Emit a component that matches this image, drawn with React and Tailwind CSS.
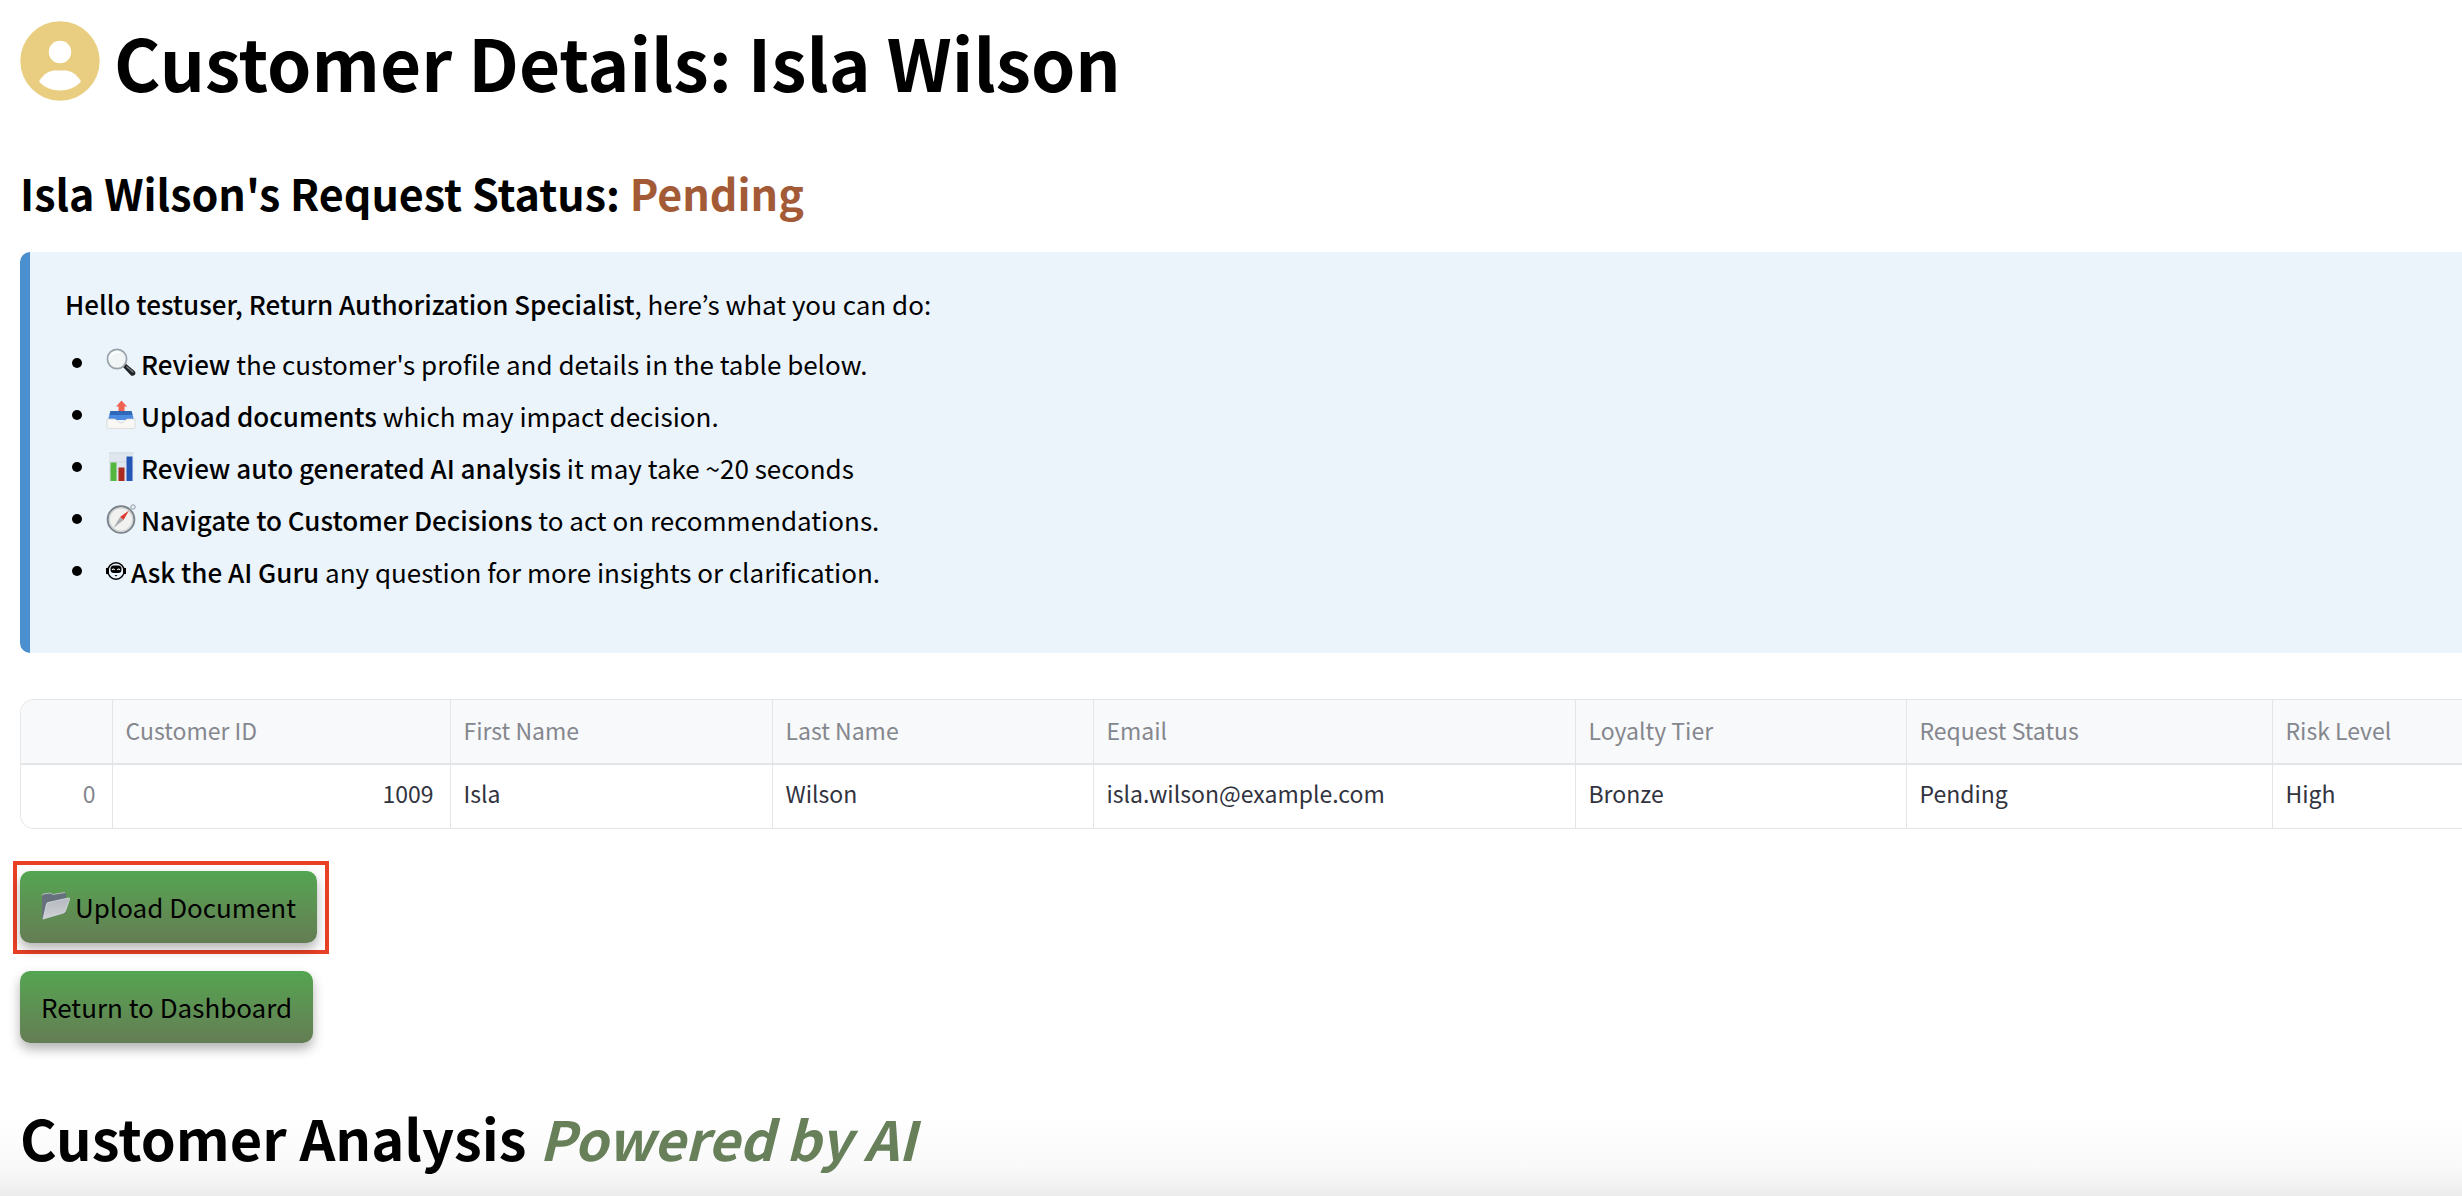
const MagnifierIcon = () => (
  <svg viewBox="0 0 30 30" className="size-[30px] shrink-0" role="img" aria-label="Magnifying glass">
    <path d="M17.500 17l2-1.500 9 7.500c2.500 2.500-.500 6-3.500 4.500l-7.500-8z" fill="#1f2225" />
    <path d="M20.500 18.500l7 6" stroke="#7d8389" strokeWidth="1.200" />
    <circle cx="11" cy="11" r="9.600" fill="#f2f5f6" stroke="#98a3ab" strokeWidth="1.700" />
    <path d="M4 9.500a7.500 7.500 0 0 1 10-5" fill="none" stroke="#ffffff" strokeWidth="1.600" />
  </svg>
);

const OutboxIcon = () => (
  <svg viewBox="0 0 30 30" className="size-[30px] shrink-0" role="img" aria-label="Outbox tray">
    <path d="M4.500 11h21l2.500 9H2z" fill="#4a8ae0" />
    <path d="M4.500 11h21l1 4h-23z" fill="#2f68b6" />
    <path d="M15.500.500l5.500 6h-2.500V11h-6V6.500H10z" fill="#ee6352" />
    <path d="M1 19h7.500c2.500 0 3 4 6.500 4s4-4 6.500-4H29v8.500a1 1 0 0 1-1 1H2a1 1 0 0 1-1-1z" fill="#f8f7f3" stroke="#d3d3d0" strokeWidth=".7" />
  </svg>
);

const ChartIcon = () => (
  <svg viewBox="0 0 30 30" className="size-[30px] shrink-0" role="img" aria-label="Bar chart">
    <path d="M3 .500h24.500V29H3z" fill="#dfe6ee" />
    <path d="M3 1h24.500M3 10h24.500M3 19h24.500" stroke="#ccd4dd" strokeWidth=".8" />
    <path d="M4.500 10.500h6V29h-6z" fill="#52b73c" />
    <path d="M12.500 15.500h6V29h-6z" fill="#ab2a20" />
    <path d="M20.500 4.500h6V29h-6z" fill="#2456b8" />
  </svg>
);

const CompassIcon = () => (
  <svg viewBox="0 0 30 30" className="size-[30px] shrink-0" role="img" aria-label="Compass">
    <circle cx="27" cy="3" r="2.200" fill="none" stroke="#8d969d" strokeWidth="1" />
    <circle cx="15" cy="15.500" r="13.300" fill="#f1f1ef" stroke="#7c848b" strokeWidth="2" />
    <circle cx="15" cy="15.500" r="11.600" fill="none" stroke="#cfd3d6" strokeWidth="1.200" />
    <path d="M23 6.500l-5.500 9.500-3.500-3z" fill="#dc3a32" />
    <path d="M7.500 24l6.500-11 3.500 3z" fill="#a7adb2" />
  </svg>
);

const RobotIcon = () => (
  <svg viewBox="0 0 20 20" className="size-5 shrink-0" role="img" aria-label="Robot">
    <path d="M0 7h3v6H0zM17 7h3v6h-3z" />
    <circle cx="10" cy="10" r="8.200" fill="none" stroke="#000" strokeWidth="1.600" />
    <rect x="4.500" y="4.500" width="11" height="7.500" rx="3.500" />
    <path d="M6 9q1.300-2 2.700 0M11.300 9q1.300-2 2.700 0" fill="none" stroke="#fff" strokeWidth="1.100" />
    <path d="M8.500 14h3l-1.500 1.500z" />
  </svg>
);

const FolderIcon = () => (
  <svg viewBox="0 0 30 30" className="size-[30px] shrink-0" role="img" aria-label="Folder">
    <defs>
      <linearGradient id="folder-front" x1="0" y1="0" x2="0" y2="1">
        <stop offset="0" stopColor="#b4b8bf" />
        <stop offset="1" stopColor="#cfd1d5" />
      </linearGradient>
    </defs>
    <path d="M1 4.500l1-1.500 8-1 1.500 1.500L24 1.500l1 1V22L2 28H1z" fill="#66717d" />
    <path d="M1 4.500l1-1.500 8-1 1.500 1.500L24 1.500" fill="none" stroke="#c5cad0" strokeWidth=".8" />
    <path d="M2 28L5.500 13q.300-1 1.500-1.500L27.500 7q1.500-.300 1 1.500L24.500 20q-.500 1.500-2 2z" fill="url(#folder-front)" stroke="#e3e5e8" strokeWidth=".7" />
  </svg>
);

const AccountIcon = () => (
  <svg viewBox="0 0 80 80" className="size-20 shrink-0" aria-hidden="true">
    <circle cx="40" cy="40" r="39.700" fill="#e9cd80" />
    <circle cx="40" cy="31" r="11.200" fill="#fff" />
    <path d="M19 60.500C24 52 30 49.500 36 49.500h8c6 0 12 2.500 17 11C56 66.500 48 69.500 40 69.500s-16-3-21-9z" fill="#fff" />
  </svg>
);

const steps = [
  { Icon: MagnifierIcon, title: "Review", text: " the customer's profile and details in the table below." },
  { Icon: OutboxIcon, title: "Upload documents", text: " which may impact decision." },
  { Icon: ChartIcon, title: "Review auto generated AI analysis", text: " it may take ~20 seconds" },
  { Icon: CompassIcon, title: "Navigate to Customer Decisions", text: " to act on recommendations." },
  { Icon: RobotIcon, title: "Ask the AI Guru", text: " any question for more insights or clarification." },
];

const columns = [
  { name: "Customer ID", value: "1009", width: "w-[338px]", align: "text-right" },
  { name: "First Name", value: "Isla", width: "w-[322px]", align: "text-left" },
  { name: "Last Name", value: "Wilson", width: "w-[321px]", align: "text-left" },
  { name: "Email", value: "isla.wilson@example.com", width: "w-[482px]", align: "text-left" },
  { name: "Loyalty Tier", value: "Bronze", width: "w-[331px]", align: "text-left" },
  { name: "Request Status", value: "Pending", width: "w-[366px]", align: "text-left" },
  { name: "Risk Level", value: "High", width: "w-auto", align: "text-left" },
];

const buttonClass =
  "flex h-[72px] items-center gap-1 rounded-[10px] bg-linear-to-b from-[#53a551] to-[#647d54] px-[21px] pb-0.5 text-[26px] text-black shadow-[0_6px_12px_rgba(0,0,0,0.3)]";

export default function App() {
  return (
    <main className="flex min-h-screen flex-col overflow-hidden bg-[linear-gradient(to_top,#ececec,#f9f9f9_28px,#ffffff_80px)] pt-4 pl-5 font-['Noto_Sans_CJK_KR','Noto_Sans',sans-serif] text-black">
      <h1 className="flex h-[90px] items-center gap-3.5 text-[71px] leading-[90px] font-bold">
        <AccountIcon />
        Customer Details: Isla Wilson
      </h1>

      <h2 className="mt-[54px] text-[43px] leading-[64px] font-bold">
        Isla Wilson's Request Status: <span className="text-[#a35a36]">Pending</span>
      </h2>

      <section className="mt-7 rounded-l-[10px] border-l-10 border-[#4c8fcf] bg-[#ebf3fb] pt-[30px] pb-14 pl-[35px] text-[26px]">
        <p className="leading-[44px]">
          <strong className="font-medium">Hello testuser, Return Authorization Specialist</strong>, here’s what you can do:
        </p>
        <ul className="mt-[11px]">
          {steps.map(({ Icon, title, text }) => (
            <li key={title} className="flex h-[52px] items-center">
              <span className="mr-6 ml-[7px] size-2.5 shrink-0 rounded-full bg-black" />
              <Icon />
              <span className="ml-[5px] whitespace-pre">
                <strong className="font-medium">{title}</strong>
                {text}
              </span>
            </li>
          ))}
        </ul>
      </section>

      <div className="mt-[46px] overflow-hidden rounded-l-[14px] border-y border-l border-[#e5e6e8]">
        <table className="w-full table-fixed border-collapse text-[23px] text-[#31333f]">
          <thead>
            <tr className="h-16 border-b-2 border-[#e3e5e8] bg-[#f8f9fb] text-[#85878e]">
              <th className="w-[91px] border-r border-[#e3e5e8]" aria-label="Row" />
              {columns.map((c) => (
                <th key={c.name} scope="col" className={`border-r border-[#e3e5e8] px-[13px] pb-0.5 text-left font-normal last:border-r-0 ${c.width}`}>
                  {c.name}
                </th>
              ))}
            </tr>
          </thead>
          <tbody>
            <tr className="h-16 bg-white">
              <th scope="row" className="border-r border-[#e3e5e8] px-4 pb-1.5 text-right font-normal text-[#85878e]">0</th>
              {columns.map((c) => (
                <td key={c.name} className={`border-r border-[#e3e5e8] pr-4 pb-1.5 pl-[13px] last:border-r-0 ${c.align}`}>{c.value}</td>
              ))}
            </tr>
          </tbody>
        </table>
      </div>

      <div className="mt-8 -ml-[7px] self-start border-4 border-[#ea4025] pt-1.5 pr-2 pb-[7px] pl-[3px]">
        <button type="button" className={buttonClass}>
          <FolderIcon />
          Upload Document
        </button>
      </div>
      <div className="mt-[17px] self-start">
        <button type="button" className={buttonClass}>Return to Dashboard</button>
      </div>

      <h2 className="mt-[54px] text-[56px] leading-[80px] font-bold">
        Customer Analysis <em className="text-[54px] text-[#67805a]">Powered by AI</em>
      </h2>
    </main>
  );
}
